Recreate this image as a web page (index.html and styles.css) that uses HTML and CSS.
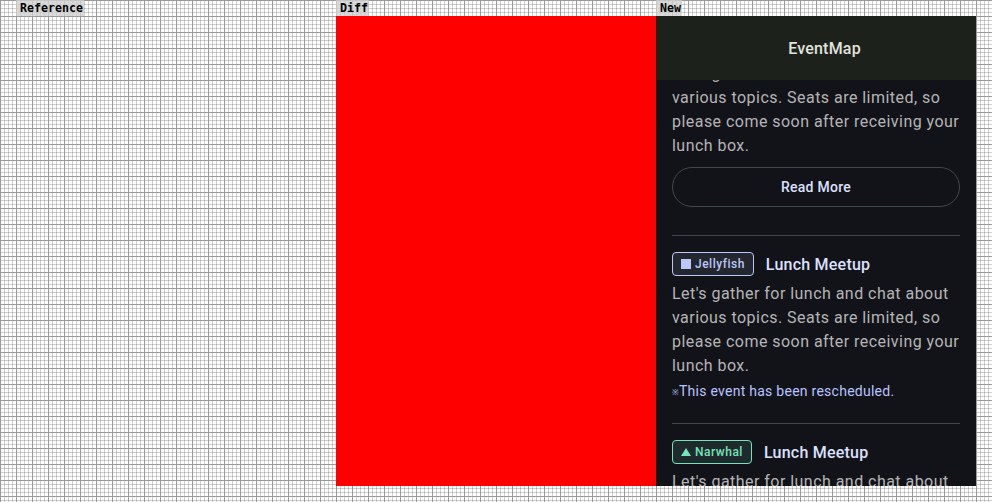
FILE: index.html
```html
<!DOCTYPE html>
<html lang="en">
<head>
<meta charset="utf-8">
<title>EventMap</title>
<link rel="stylesheet" href="styles.css">
</head>
<body>
<main class="comparison">
  <section class="column"><h2 class="label">Reference</h2></section>
  <section class="column"><h2 class="label">Diff</h2><div class="panel diff"></div></section>
  <section class="column"><h2 class="label">New</h2>
    <div class="panel app">
      <header class="appbar">EventMap</header>
      <div class="viewport">
        <div class="events">
          <article class="event first">
            <p class="description">Let's gather for lunch and chat about various topics. Seats are limited, so please come soon after receiving your lunch box.</p>
            <button class="more">Read More</button>
          </article>
          <article class="event">
            <div class="heading">
              <span class="badge jellyfish"><svg width="10" height="10" viewBox="0 0 10 10"><path d="M0 0h10v10H0z" fill="currentColor"/></svg><span>Jellyfish</span></span>
              <h3 class="title">Lunch Meetup</h3>
            </div>
            <p class="description">Let's gather for lunch and chat about various topics. Seats are limited, so please come soon after receiving your lunch box.</p>
            <p class="notice"><span class="mark">※</span>This event has been rescheduled.</p>
          </article>
          <article class="event">
            <div class="heading">
              <span class="badge narwhal"><svg width="10" height="10" viewBox="0 0 10 10"><path d="M5 1l5 8H0z" fill="currentColor"/></svg><span>Narwhal</span></span>
              <h3 class="title">Lunch Meetup</h3>
            </div>
            <p class="description">Let's gather for lunch and chat about</p>
          </article>
        </div>
      </div>
    </div>
  </section>
</main>
</body>
</html>
```
FILE: styles.css
```css
* { box-sizing: border-box; }
body {
  margin: 0;
  height: 502px;
  overflow: hidden;
  background-color: #fff;
  background-image:
    linear-gradient(#999 1px, transparent 1px),
    linear-gradient(90deg, #999 1px, transparent 1px),
    linear-gradient(rgba(0, 0, 0, .18) 1px, transparent 1px),
    linear-gradient(90deg, rgba(0, 0, 0, .18) 1px, transparent 1px);
  background-size: 16px 16px, 16px 16px, 4px 4px, 4px 4px;
  font-family: Roboto, sans-serif;
}
h2, h3, p { margin: 0; }
.comparison { display: grid; grid-template-columns: repeat(3, 320px); padding: 0 16px; }
.column { display: flex; flex-direction: column; align-items: flex-start; }
.label {
  height: 16px;
  padding: 0 1px 0 4px;
  background: rgba(208, 208, 208, .8);
  font: bold 11.63px/16px "DejaVu Sans Mono", monospace;
  color: #000;
}
.panel { width: 320px; height: 470px; }
.diff { background: #f00; }
.app { display: flex; flex-direction: column; background: #121318; overflow: hidden; }
.appbar {
  flex: none;
  height: 64px;
  padding: 1px 0 0 17px;
  background: #1d211b;
  color: #e0e4db;
  font-size: 16px;
  font-weight: 500;
  line-height: 64px;
  letter-spacing: .2px;
  text-align: center;
}
.viewport { flex: 1; min-height: 0; overflow: hidden; }
.events { margin-top: -18px; padding: 0 16px; }
.event { border-top: 1px solid #444748; padding: 16px 0 22px; }
.event.first { border: 0; padding: 0 0 28px; }
.heading { display: flex; align-items: center; gap: 12px; height: 24px; margin-bottom: 6px; }
.badge {
  display: flex;
  align-items: center;
  gap: 4px;
  height: 24px;
  padding: 0 8px;
  border: 1px solid currentColor;
  border-radius: 4px;
  font-size: 12px;
  font-weight: 500;
  letter-spacing: .5px;
}
.badge svg { display: block; }
.jellyfish { color: #bbc7fb; background: #25272f; }
.narwhal { color: #76e4b8; background: #1e2a2b; }
.title { padding-top: 2px; font-size: 16px; font-weight: 500; line-height: 24px; letter-spacing: .23px; color: #dce1ff; }
.description { font-size: 16px; line-height: 24px; letter-spacing: .46px; color: #b5b5b6; white-space: normal; margin-right: -4px; }
.notice { margin-top: 3px; font-size: 14px; line-height: 20px; letter-spacing: .26px; color: #b8c4ff; }
.mark { font-size: 8px; line-height: 1; vertical-align: 1px; letter-spacing: 0; }
.more {
  display: block;
  width: 100%;
  height: 40px;
  margin-top: 9px;
  padding: 0;
  border: 1px solid #414849;
  border-radius: 20px;
  background: transparent;
  color: #dce1ff;
  font: 500 14px/20px Roboto, sans-serif;
  letter-spacing: .25px;
}
```
